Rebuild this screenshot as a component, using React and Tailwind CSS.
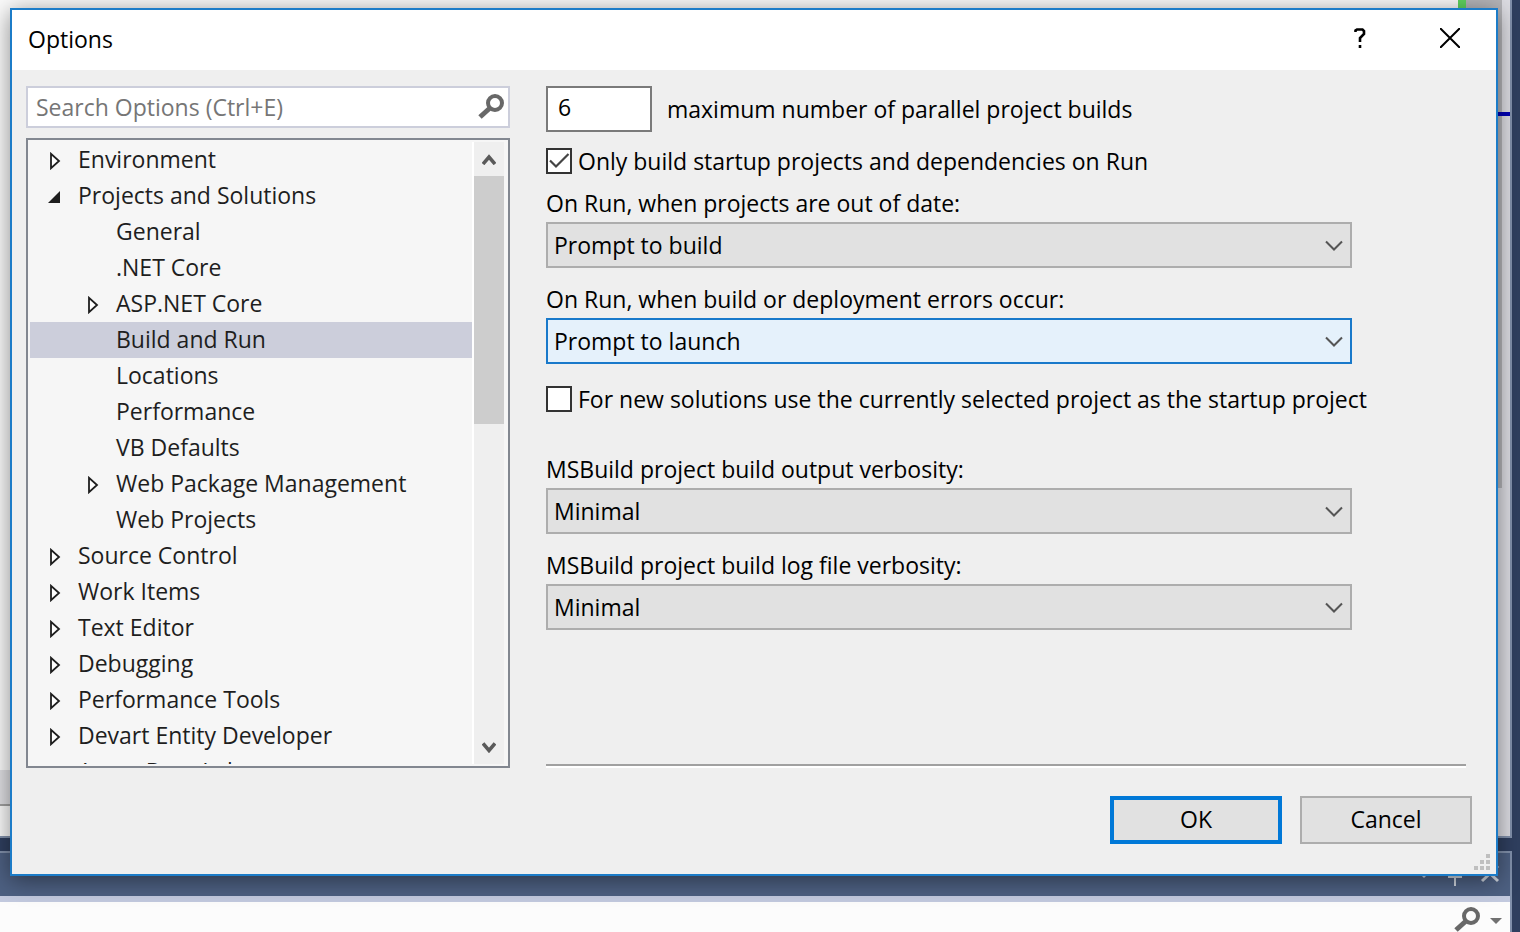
import { useState } from 'react'

const treeItems = [
  { label: 'Environment', level: 0, state: 'closed' },
  { label: 'Projects and Solutions', level: 0, state: 'open' },
  { label: 'General', level: 1 },
  { label: '.NET Core', level: 1 },
  { label: 'ASP.NET Core', level: 1, state: 'closed' },
  { label: 'Build and Run', level: 1 },
  { label: 'Locations', level: 1 },
  { label: 'Performance', level: 1 },
  { label: 'VB Defaults', level: 1 },
  { label: 'Web Package Management', level: 1, state: 'closed' },
  { label: 'Web Projects', level: 1 },
  { label: 'Source Control', level: 0, state: 'closed' },
  { label: 'Work Items', level: 0, state: 'closed' },
  { label: 'Text Editor', level: 0, state: 'closed' },
  { label: 'Debugging', level: 0, state: 'closed' },
  { label: 'Performance Tools', level: 0, state: 'closed' },
  { label: 'Devart Entity Developer', level: 0, state: 'closed' },
  { label: 'Azure Data Lake', level: 0 }
]

function SearchIcon({ className }) {
  return (
    <svg className={className} width="26" height="26" viewBox="0 0 26 26" fill="none" stroke="#686868" aria-hidden="true">
      <circle cx="17" cy="9" r="7" strokeWidth="4" />
      <path d="M12 14L2 23" strokeWidth="5" />
    </svg>
  )
}

function Expander({ state }) {
  if (state === 'open') {
    return (
      <svg width="12" height="12" viewBox="0 0 12 12" aria-hidden="true">
        <path d="M12 0V12H0Z" fill="#1e1e1e" />
      </svg>
    )
  }
  return (
    <svg className="ml-[2px]" width="12" height="18" viewBox="0 0 12 18" aria-hidden="true">
      <path d="M1 1.8V16.2L9 9Z" fill="#fff" stroke="#1e1e1e" strokeWidth="1.8" />
    </svg>
  )
}

function TreeItem({ item, selected, onSelect }) {
  return (
    <li>
      <button
        type="button"
        onClick={onSelect}
        className={`flex h-9 w-full text-left leading-[34px] whitespace-nowrap ${item.level ? 'pl-14' : 'pl-[18px]'} ${
          selected ? 'bg-[#cccedb]' : ''
        }`}
      >
        <span className="flex h-9 w-[30px] shrink-0 items-center pt-px">{item.state && <Expander state={item.state} />}</span>
        {item.label}
      </button>
    </li>
  )
}

function SelectField({ id, label, options, active, className }) {
  return (
    <div className={className}>
      <label htmlFor={id} className="block h-9 leading-[34px]">
        {label}
      </label>
      <div className="relative mr-[114px]">
        <select
          id={id}
          className={`block h-[46px] w-full appearance-none border-2 px-[6px] outline-none ${
            active ? 'border-[#1979ca] bg-[#e5f1fb]' : 'border-[#adadad] bg-[#e1e1e1]'
          }`}
        >
          {options.map(option => (
            <option key={option}>{option}</option>
          ))}
        </select>
        <svg className="pointer-events-none absolute top-[18px] right-[9px]" width="18" height="12" viewBox="0 0 18 12" fill="none" aria-hidden="true">
          <path d="M1 1.5L9 9.5L17 1.5" stroke="#555" strokeWidth="2" />
        </svg>
      </div>
    </div>
  )
}

function CheckField({ id, label, checked, onChange, className }) {
  return (
    <div className={`flex h-[26px] items-center gap-[6px] ${className}`}>
      <span className="relative flex">
        <input
          id={id}
          type="checkbox"
          checked={checked}
          onChange={e => onChange(e.target.checked)}
          className="h-[26px] w-[26px] appearance-none border-2 border-[#333] bg-white"
        />
        {checked && (
          <svg className="pointer-events-none absolute inset-0" width="26" height="26" viewBox="0 0 26 26" fill="none" aria-hidden="true">
            <path d="M4 12.5L10 18.5L22.5 6" stroke="#444" strokeWidth="2.2" />
          </svg>
        )}
      </span>
      <label htmlFor={id} className="pb-px whitespace-nowrap">
        {label}
      </label>
    </div>
  )
}

function Backdrop() {
  return (
    <div className="flex h-screen bg-[#2f3f5f]" aria-hidden="true">
      <div className="flex min-w-0 flex-1 flex-col">
        <div className="flex h-[838px] border-r-2 border-b-2 border-[#8190ab]">
          <div className="flex flex-1 flex-col">
            <div className="h-[770px] bg-[#fafafa]" />
            <div className="h-9 border-b-2 border-[#a0a0a0] bg-[#dfdfe3]" />
            <div className="flex-1 bg-[#fafafa]" />
          </div>
          <div className="h-4 w-2 bg-[#5fd35f]" />
          <div className="w-8 bg-[#b4b4b8]" />
          <div className="flex w-3 flex-col bg-[#dcdce2]">
            <div className="h-28 border-l-4 border-[#b4b4b8]" />
            <div className="h-1 bg-[#0000b4]" />
            <div className="h-[372px] border-l-4 border-[#b4b4b8]" />
          </div>
        </div>
        <div className="mt-[13px] flex h-[45px] items-end justify-end gap-4 border-t-2 border-r-2 border-[#8190ab] bg-[#4d6082] pr-[10px] pb-[10px]">
          <svg width="12" height="20" viewBox="0 0 12 20" fill="#ced4dd">
            <path d="M0 6H12L6 12Z" />
          </svg>
          <svg width="18" height="20" viewBox="0 0 18 20" fill="none" stroke="#ced4dd" strokeWidth="2">
            <path d="M5 0V10M12 0V10M2 11H16M9 11V20" />
          </svg>
          <svg width="20" height="20" viewBox="0 0 20 20" fill="none" stroke="#ced4dd" strokeWidth="3">
            <path d="M2 0L18 15M18 0L2 15" />
          </svg>
        </div>
        <div className="h-[6px] border-r-2 border-[#8190ab] bg-[#c3cadf]" />
        <div className="flex flex-1 justify-end gap-[10px] overflow-hidden border-r-2 border-[#8190ab] bg-[#fcfcfc] pt-[5px] pr-2">
          <SearchIcon className="shrink-0" />
          <svg className="mt-[11px]" width="12" height="6" viewBox="0 0 12 6">
            <path d="M0 0H12L6 6Z" fill="#717171" />
          </svg>
        </div>
      </div>
      <div className="w-2" />
    </div>
  )
}

export default function App() {
  const [selected, setSelected] = useState('Build and Run')
  const [onlyStartup, setOnlyStartup] = useState(true)
  const [useCurrent, setUseCurrent] = useState(false)

  return (
    <div className="relative min-h-screen overflow-hidden font-['Open_Sans','Noto_Sans',sans-serif] text-[23px] leading-9 text-black">
      <Backdrop />

      <div
        role="dialog"
        aria-labelledby="dialog-title"
        className="absolute top-2 right-[22px] left-[10px] border-2 border-[#1c7cc8] bg-[#efefef] shadow-[0_4px_22px_rgba(0,0,0,0.45)]"
      >
        <header className="flex h-[60px] items-center bg-white pl-4">
          <h1 id="dialog-title" className="flex-1 pb-[2px]">
            Options
          </h1>
          <button type="button" aria-label="Help" className="flex h-full w-[88px] items-center justify-center pb-1">
            <svg width="12" height="20" viewBox="0 0 12 20" fill="none" aria-hidden="true">
              <path d="M1.5 4V2.5L3 1.5H8.5L10 3V6L6 10V14M6 17V20" stroke="#000" strokeWidth="2.6" />
            </svg>
          </button>
          <button type="button" aria-label="Close" className="flex h-full w-[92px] items-center justify-center pb-1">
            <svg width="20" height="20" viewBox="0 0 20 20" fill="none" aria-hidden="true">
              <path d="M0 0L20 20M20 0L0 20" stroke="#000" strokeWidth="2" />
            </svg>
          </button>
        </header>

        <div className="flex gap-9 pt-4 pr-[30px] pl-[14px]">
          <div className="flex w-[484px] shrink-0 flex-col gap-[10px] text-[#1e1e1e]">
            <div className="flex h-[42px] items-center border-2 border-[#cccedb] bg-white pr-1 pl-2">
              <input
                type="search"
                aria-label="Search Options"
                placeholder="Search Options (Ctrl+E)"
                className="min-w-0 flex-1 outline-none placeholder:text-[#767676]"
              />
              <button type="button" aria-label="Search">
                <SearchIcon />
              </button>
            </div>

            <div className="flex h-[630px] border-2 border-[#828790] bg-[#f6f6f6] py-[2px] pr-1 pl-[2px]">
              <ul className="flex-1 overflow-hidden">
                {treeItems.map(item => (
                  <TreeItem
                    key={item.label}
                    item={item}
                    selected={item.label === selected}
                    onSelect={() => setSelected(item.label)}
                  />
                ))}
              </ul>
              <div className="flex w-8 flex-col items-center border-l-2 border-white bg-[#efefef]">
                <button type="button" aria-label="Scroll up" className="flex h-[34px] w-full items-center justify-center">
                  <svg width="14" height="12" viewBox="0 0 14 12" fill="none" aria-hidden="true">
                    <path d="M1 11L7 4L13 11" stroke="#5a5a5a" strokeWidth="3.6" />
                  </svg>
                </button>
                <div className="h-[248px] w-full bg-[#cdcdcd]" />
                <button type="button" aria-label="Scroll down" className="mt-auto flex h-[34px] w-full items-center justify-center">
                  <svg width="14" height="12" viewBox="0 0 14 12" fill="none" aria-hidden="true">
                    <path d="M1 2.5L7 9.5L13 2.5" stroke="#5a5a5a" strokeWidth="3.6" />
                  </svg>
                </button>
              </div>
            </div>
          </div>

          <div className="flex min-w-0 flex-1 flex-col">
            <div className="flex items-center gap-[15px]">
              <input
                id="parallel-builds"
                type="text"
                defaultValue="6"
                className="h-[46px] w-[106px] border-2 border-[#7a7a7a] bg-white px-[10px] pb-1 outline-none"
              />
              <label htmlFor="parallel-builds">maximum number of parallel project builds</label>
            </div>
            <CheckField
              id="only-startup"
              label="Only build startup projects and dependencies on Run"
              checked={onlyStartup}
              onChange={setOnlyStartup}
              className="mt-4"
            />
            <SelectField
              id="out-of-date"
              label="On Run, when projects are out of date:"
              options={['Prompt to build', 'Always build', 'Never build']}
              className="mt-3"
            />
            <SelectField
              id="on-errors"
              label="On Run, when build or deployment errors occur:"
              options={['Prompt to launch', 'Do not launch', 'Launch old version']}
              active
              className="mt-[14px]"
            />
            <CheckField
              id="use-current"
              label="For new solutions use the currently selected project as the startup project"
              checked={useCurrent}
              onChange={setUseCurrent}
              className="mt-[22px]"
            />
            <SelectField
              id="output-verbosity"
              label="MSBuild project build output verbosity:"
              options={['Minimal', 'Quiet', 'Normal', 'Detailed', 'Diagnostic']}
              className="mt-10"
            />
            <SelectField
              id="log-verbosity"
              label="MSBuild project build log file verbosity:"
              options={['Minimal', 'Quiet', 'Normal', 'Detailed', 'Diagnostic']}
              className="mt-[14px]"
            />
            <div className="mt-auto h-1 border-t-2 border-b-2 border-t-[#a0a0a0] border-b-white" />
          </div>
        </div>

        <footer className="flex justify-end gap-[18px] pt-7 pr-6 pb-[30px]">
          <button type="button" className="h-12 w-[172px] border-4 border-[#0078d7] bg-[#e1e1e1] pb-[2px]">
            OK
          </button>
          <button type="button" className="h-12 w-[172px] border-2 border-[#adadad] bg-[#e1e1e1] pb-[2px]">
            Cancel
          </button>
        </footer>

        <svg className="absolute right-[6px] bottom-1" width="16" height="16" viewBox="0 0 16 16" fill="#bfbfbf" aria-hidden="true">
          <path d="M12 0h4v4h-4zM12 6h4v4h-4zM12 12h4v4h-4zM6 6h4v4h-4zM6 12h4v4h-4zM0 12h4v4h-4z" />
        </svg>
      </div>
    </div>
  )
}
